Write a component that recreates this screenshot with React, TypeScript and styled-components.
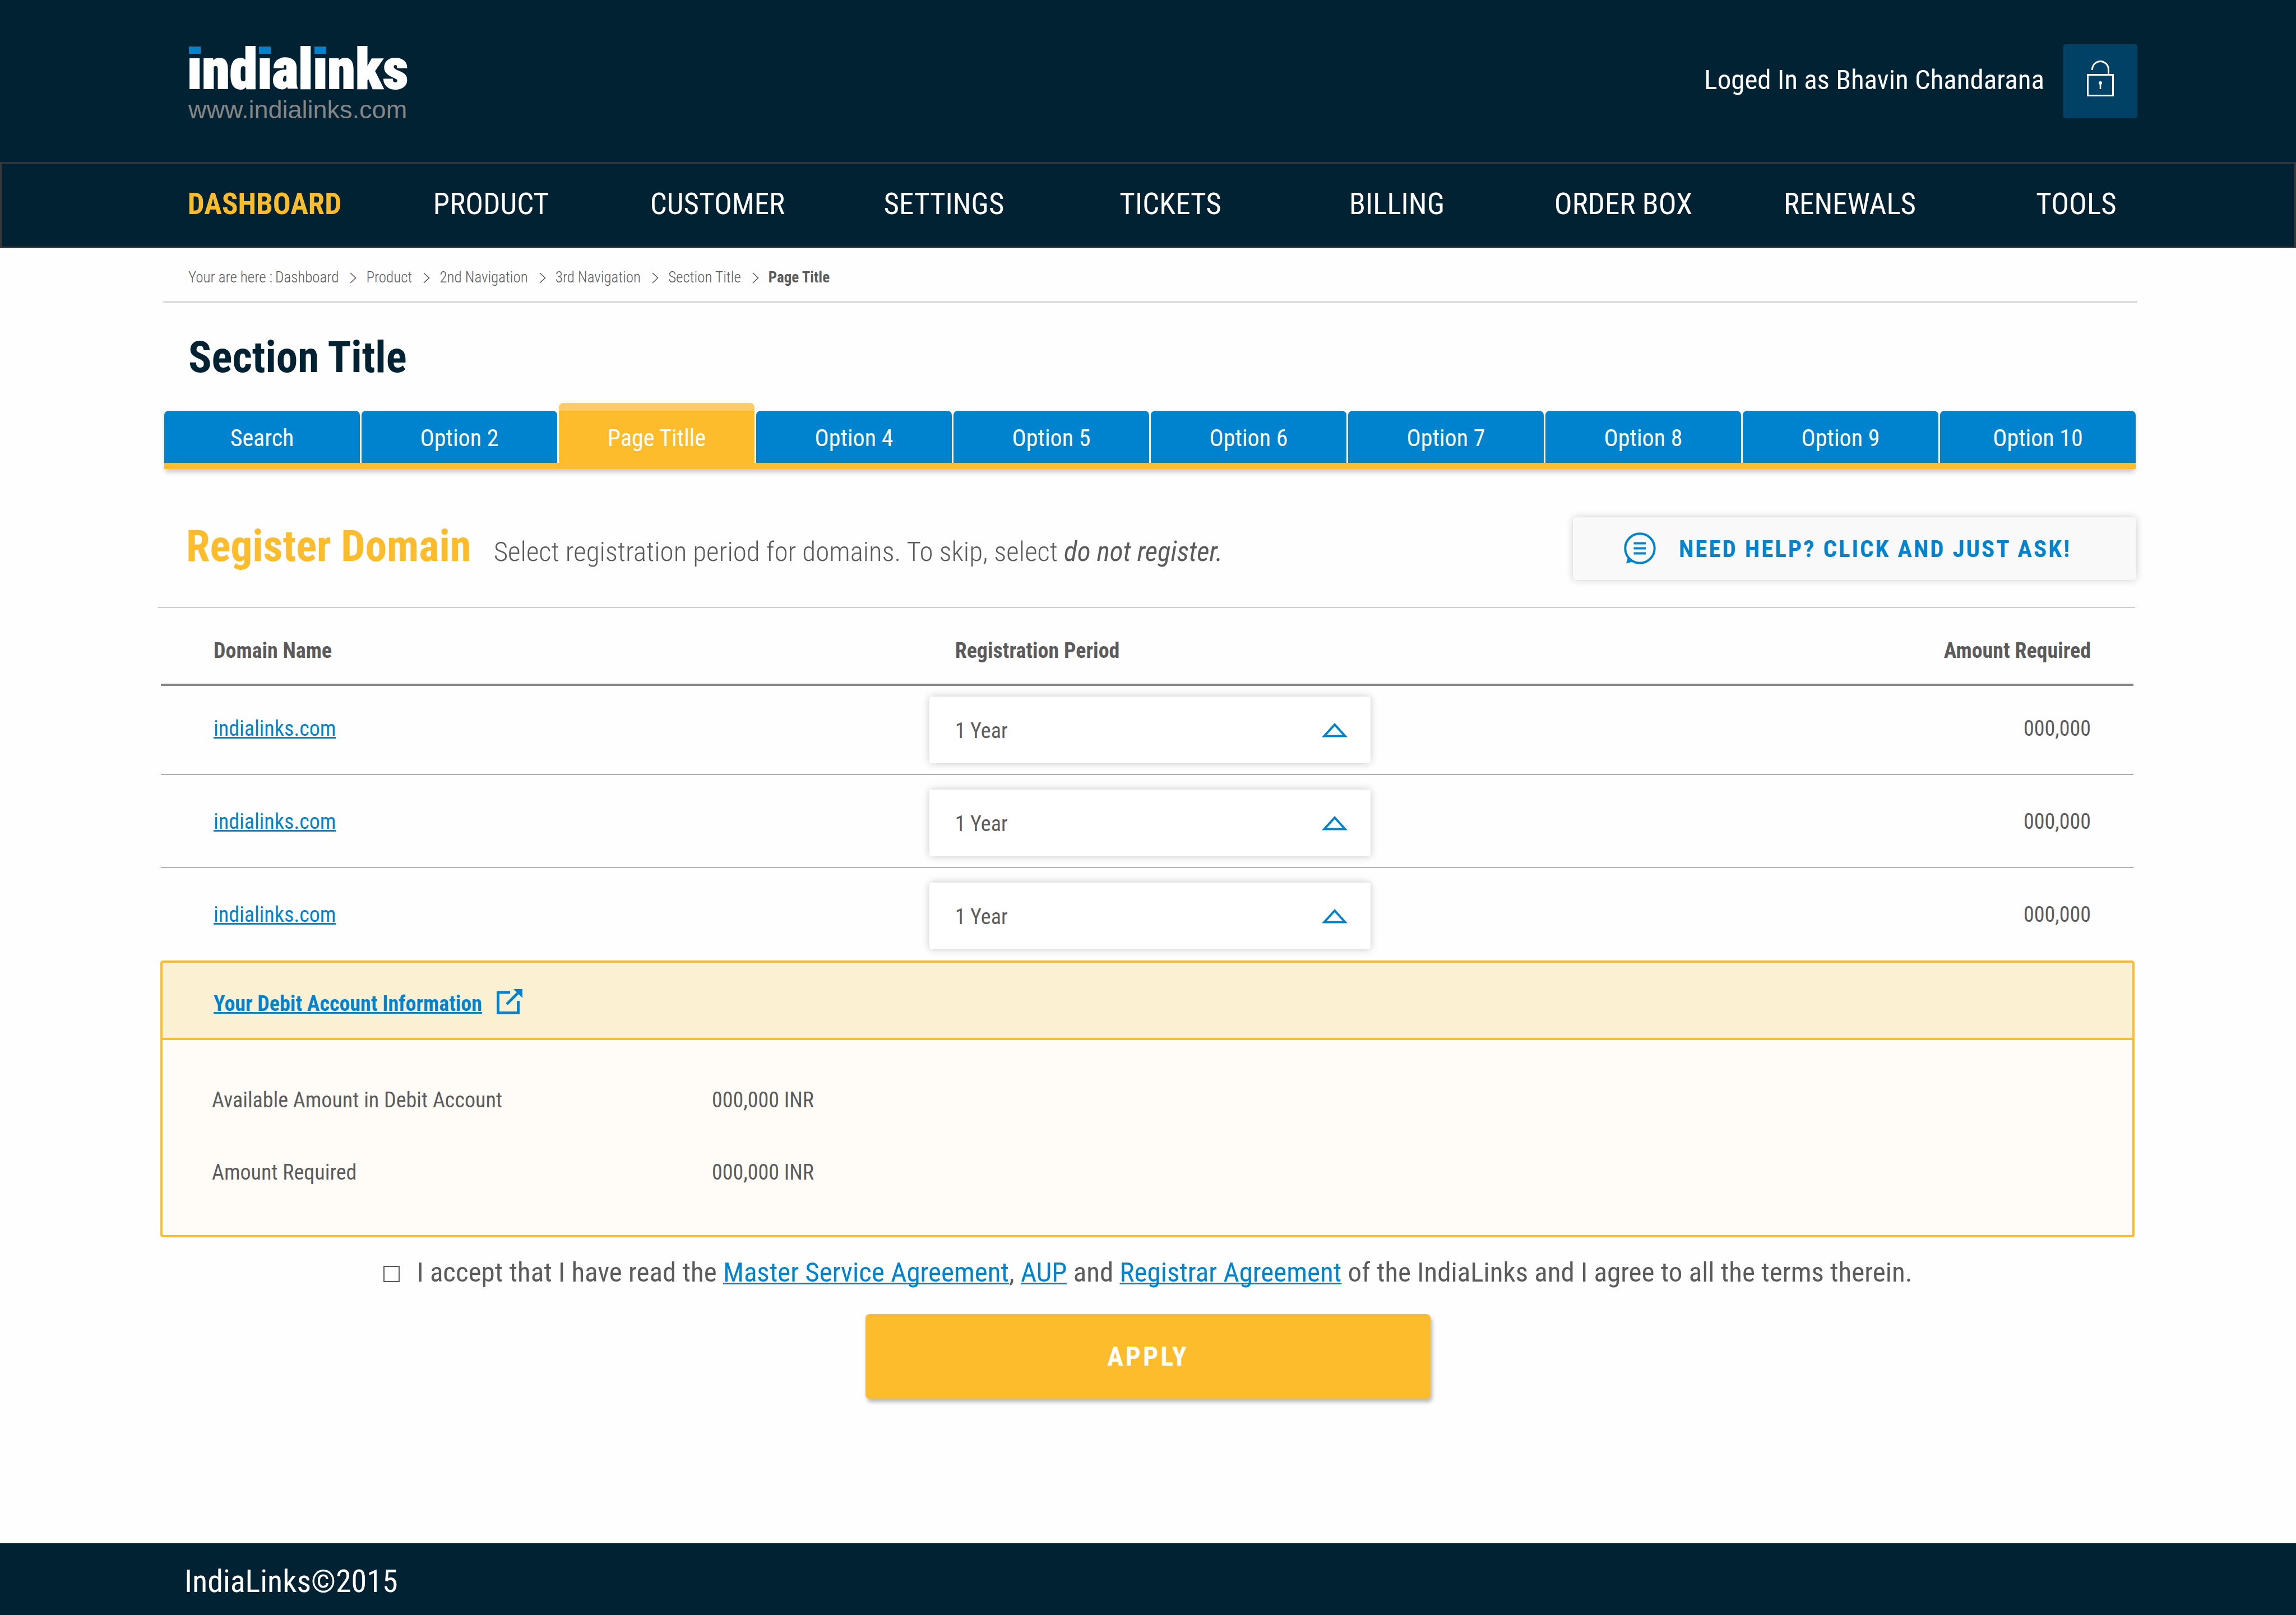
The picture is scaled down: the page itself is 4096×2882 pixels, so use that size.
import React from "react";
import styled, { createGlobalStyle } from "styled-components";

const navy = "#002233";
const blue = "#0083ce";
const yellow = "#fdbc2c";
const grey = "#5b5b5b";

const GlobalStyle = createGlobalStyle`
  *, *::before, *::after { box-sizing: border-box; }
  body {
    margin: 0;
    background: #fefefe;
    color: ${grey};
    font-family: "Roboto Condensed", Roboto, "Liberation Sans", sans-serif;
    font-size: 38px;
    line-height: 48px;
  }
  h1, h2, p, ul, ol, dl, dd { margin: 0; }
  ul, ol { list-style: none; }
  button, select, input { font: inherit; }
`;

const Page = styled.div`
  min-height: 100vh;
  display: flex;
  flex-direction: column;
`;

const Header = styled.header`
  display: flex;
  justify-content: space-between;
  align-items: flex-start;
  height: 289px;
  padding: 79px 283px 0 334px;
  background: ${navy};
  color: #fff;
`;

const Brand = styled.a`
  display: flex;
  flex-direction: column;
  text-decoration: none;
`;

const Wordmark = styled.span`
  font-size: 100px;
  line-height: 90px;
  font-weight: 900;
  color: #fff;
  -webkit-text-stroke: 2px #fff;
`;

/* The "i" carries a square blue tip in place of its round dot. */
const TippedLetter = styled.span`
  background-image:
    linear-gradient(${blue}, ${blue}),
    linear-gradient(transparent 0 36px, #fff 36px);
  background-repeat: no-repeat;
  background-position: center 18px, 0 0;
  background-size: 21px 13px, 100% 100%;
  background-clip: border-box, text;
  color: transparent;
  -webkit-text-stroke: 2px transparent;
`;

const SiteUrl = styled.span`
  padding: 2px 0 0 2px;
  font-family: "Liberation Sans", Arial, sans-serif;
  font-size: 45px;
  line-height: 50px;
  color: #878787;
`;

const Account = styled.div`
  display: flex;
  align-items: center;
  gap: 34px;
  font-size: 49px;
  line-height: 60px;
`;

const AccountName = styled.span`
  padding-bottom: 4px;
`;

const LockButton = styled.button`
  display: grid;
  place-items: center;
  width: 132px;
  height: 132px;
  padding: 0 0 10px;
  border: 0;
  border-radius: 4px;
  background: #004165;
`;

const MainNav = styled.nav`
  padding: 0 187px 0 267px;
  border: 3px solid #383838;
  background: ${navy};
`;

const NavList = styled.ul`
  display: grid;
  grid-template-columns: repeat(9, 1fr);
  height: 148px;
  padding: 0 0 5px;
  align-items: center;
`;

const NavItem = styled.li`
  display: flex;
  justify-content: center;
`;

const NavLink = styled.a<{ $active?: boolean }>`
  font-size: 53px;
  line-height: 64px;
  font-weight: ${(p) => (p.$active ? 700 : 400)};
  color: ${(p) => (p.$active ? yellow : "#fff")};
  text-decoration: none;
  white-space: nowrap;
`;

const Main = styled.main`
  flex: 1;
  display: flex;
  flex-direction: column;
  padding: 0 283px 100px 287px;
`;

const Crumbs = styled.nav`
  display: flex;
  gap: 5px;
  margin-left: 4px;
  padding: 36px 0 26px 45px;
  border-bottom: 4px solid #dfdfdf;
  font-size: 27px;
  line-height: 32px;
  font-weight: 300;
`;

const CrumbList = styled.ol`
  display: flex;
  padding: 0;
`;

const Crumb = styled.li`
  display: flex;
  align-items: center;
`;

const Chevron = styled.svg`
  margin: 2px 17px 0 20px;
`;

const CrumbLink = styled.a<{ $current?: boolean }>`
  color: ${grey};
  font-weight: ${(p) => (p.$current ? 700 : 300)};
  text-decoration: none;
`;

const SectionTitle = styled.h1`
  margin: 53px 0 0 49px;
  font-size: 77px;
  line-height: 88px;
  font-weight: 700;
  color: ${navy};
`;

const Tabs = styled.nav`
  display: flex;
  align-items: flex-end;
  gap: 3px;
  margin: 37px 3px 0 6px;
  border-bottom: 11px solid ${yellow};
  box-shadow: 0 8px 8px -2px rgba(0, 0, 0, 0.2);
`;

const Tab = styled.a<{ $active?: boolean }>`
  flex: 1;
  padding: 25px 0 20px;
  border-radius: 8px 8px 0 0;
  border-top: ${(p) => (p.$active ? "14px solid #fecb64" : "0")};
  background: ${(p) => (p.$active ? yellow : blue)};
  color: #fff;
  font-size: 42px;
  line-height: 48px;
  text-align: center;
  text-decoration: none;
`;

const Intro = styled.section`
  display: flex;
  align-items: flex-start;
  margin: 86px 4px 0 -5px;
  padding: 0 0 48px 50px;
  border-bottom: 1px solid #808080;
`;

const IntroText = styled.div`
  flex: 1;
  display: flex;
  align-items: baseline;
  gap: 40px;
  padding-top: 8px;
`;

const IntroTitle = styled.h2`
  font-size: 77px;
  line-height: 88px;
  font-weight: 700;
  color: ${yellow};
`;

const IntroNote = styled.p`
  font-size: 49px;
  line-height: 60px;
  font-weight: 300;
  em { font-weight: 400; }
`;

const HelpButton = styled.button`
  display: flex;
  align-items: center;
  gap: 40px;
  width: 1005px;
  height: 112px;
  margin-right: -2px;
  padding: 0 0 0 91px;
  border: 0;
  border-radius: 6px;
  background: #f9f9f9;
  box-shadow: 0 0 14px rgba(0, 0, 0, 0.2);
  color: ${blue};
  font-size: 43px;
  line-height: 48px;
  font-weight: 700;
  letter-spacing: 3px;
  white-space: nowrap;
`;

const DomainTable = styled.table`
  width: calc(100% - 7px);
  border-collapse: separate;
  border-spacing: 0;
  table-layout: fixed;
`;

const HeadCell = styled.th<{ $right?: boolean; $indent?: number }>`
  height: 140px;
  padding: 28px 76px 10px ${(p) => p.$indent ?? 0}px;
  border-bottom: 4px solid #868686;
  text-align: ${(p) => (p.$right ? "right" : "left")};
  font-weight: 700;
`;

const Row = styled.tr`
  & td { border-bottom: 1px solid #808080; padding-top: 26px; }
  &:first-child td { padding-top: 19px; }
  &:last-child td { border-bottom: 0; }
`;

const Cell = styled.td<{ $right?: boolean; $indent?: number }>`
  padding: 0 76px 25px ${(p) => p.$indent ?? 0}px;
  text-align: ${(p) => (p.$right ? "right" : "left")};
`;

const PeriodCell = styled.td`
  padding: 0 0 20px;
`;

const TextLink = styled.a<{ $bold?: boolean }>`
  color: ${blue};
  font-weight: ${(p) => (p.$bold ? 700 : 400)};
  text-decoration: underline;
  text-decoration-thickness: 3px;
  text-underline-offset: 2px;
  text-decoration-skip-ink: none;
`;

const SelectBox = styled.div`
  position: relative;
  width: 787px;
`;

const PeriodSelect = styled.select`
  display: block;
  appearance: none;
  width: 100%;
  height: 119px;
  padding: 3px 100px 0 46px;
  border: 0;
  border-radius: 4px;
  background: #fff;
  box-shadow: 0 0 14px rgba(0, 0, 0, 0.22);
  color: ${grey};
`;

const Arrow = styled.svg`
  position: absolute;
  right: 41px;
  top: 47px;
  pointer-events: none;
`;

const Debit = styled.section`
  margin: 0 5px 0 -1px;
  border: 4px solid ${yellow};
  border-radius: 5px;
  background: #fffcf8;
`;

const DebitHead = styled.div`
  display: flex;
  align-items: center;
  gap: 26px;
  height: 138px;
  padding: 12px 0 0 91px;
  border-bottom: 4px solid ${yellow};
  background: #fcf0d3;
`;

const OpenIcon = styled.svg`
  margin-bottom: 8px;
`;

const DebitList = styled.dl`
  display: grid;
  grid-template-columns: 892px 1fr;
  row-gap: 81px;
  padding: 83px 0 88px 88px;
`;

const Actions = styled.form`
  display: flex;
  flex-direction: column;
  align-items: center;
  margin-right: 4px;
`;

const Terms = styled.div`
  display: flex;
  align-items: center;
  gap: 30px;
  margin-top: 33px;
  font-size: 49px;
  line-height: 60px;
`;

const Tick = styled.input`
  appearance: none;
  width: 29px;
  height: 29px;
  margin: 5px 0 0;
  border: 2px solid ${grey};
  &:checked { background: ${blue}; }
`;

const ApplyButton = styled.button`
  width: 1008px;
  height: 151px;
  margin-top: 44px;
  padding: 0;
  border: 0;
  border-radius: 7px;
  background: ${yellow};
  box-shadow: 3px 6px 7px rgba(0, 0, 0, 0.28);
  color: #fff;
  font-size: 48px;
  line-height: 56px;
  font-weight: 700;
  letter-spacing: 4px;
`;

const Footer = styled.footer`
  padding: 36px 283px 28px 329px;
  background: ${navy};
  color: #fff;
  font-size: 56px;
  line-height: 64px;
`;

const navItems = ["DASHBOARD", "PRODUCT", "CUSTOMER", "SETTINGS", "TICKETS", "BILLING", "ORDER BOX", "RENEWALS", "TOOLS"];
const crumbs = ["Dashboard", "Product", "2nd Navigation", "3rd Navigation", "Section Title", "Page Title"];
const tabs = ["Search", "Option 2", "Page Titlle", "Option 4", "Option 5", "Option 6", "Option 7", "Option 8", "Option 9", "Option 10"];
const domains = [1, 2, 3].map((id) => ({ id, name: "indialinks.com", amount: "000,000" }));
const balances = [
  { label: "Available Amount in Debit Account", value: "000,000 INR" },
  { label: "Amount Required", value: "000,000 INR" },
];

const LockIcon = () => (
  <svg width="48" height="65" viewBox="0 0 48 65" fill="none" stroke="#fff" strokeWidth="3">
    <rect x="1.5" y="25.5" width="45" height="37" />
    <path d="M9.5 17v-1a14.5 14.5 0 0 1 29 0v9" />
    <circle cx="24" cy="40" r="3" fill="#fff" stroke="none" />
    <path d="M24 40v11" strokeWidth="2.6" />
  </svg>
);

const ChatIcon = () => (
  <svg width="58" height="58" viewBox="0 0 58 58" fill="none" stroke={blue} strokeWidth="4">
    <circle cx="28.500" cy="28.500" r="26.200" />
    <path d="M17.500 19.500H39M17.500 28.500H39M17.500 37.500H39" />
    <path d="M7 45L4 55.500l11-3z" fill={blue} stroke="none" />
  </svg>
);

const App: React.FC = () => (
  <Page>
    <GlobalStyle />
    <Header>
      <Brand href="#home">
        <Wordmark>
          {"indialinks".split("").map((letter, i) =>
            letter === "i" ? <TippedLetter key={i}>i</TippedLetter> : letter
          )}
        </Wordmark>
        <SiteUrl>www.indialinks.com</SiteUrl>
      </Brand>
      <Account>
        <AccountName>Loged In as Bhavin Chandarana</AccountName>
        <LockButton type="button" aria-label="Log out">
          <LockIcon />
        </LockButton>
      </Account>
    </Header>

    <MainNav>
      <NavList>
        {navItems.map((item, i) => (
          <NavItem key={item}>
            <NavLink href="#nav" $active={i === 0}>{item}</NavLink>
          </NavItem>
        ))}
      </NavList>
    </MainNav>

    <Main>
      <Crumbs>
        <span>Your are here :</span>
        <CrumbList>
          {crumbs.map((crumb, i) => (
            <Crumb key={crumb}>
              {i > 0 && (
                <Chevron width="12" height="20" viewBox="0 0 12 20" fill="none" stroke={grey} strokeWidth="1.6">
                  <path d="M1 1l9.500 9L1 19" />
                </Chevron>
              )}
              <CrumbLink href="#crumb" $current={i === crumbs.length - 1}>{crumb}</CrumbLink>
            </Crumb>
          ))}
        </CrumbList>
      </Crumbs>

      <SectionTitle>Section Title</SectionTitle>

      <Tabs>
        {tabs.map((tab, i) => (
          <Tab key={tab} href="#tab" $active={i === 2}>{tab}</Tab>
        ))}
      </Tabs>

      <Intro>
        <IntroText>
          <IntroTitle>Register Domain</IntroTitle>
          <IntroNote>
            Select registration period for domains. To skip, select <em>do not register.</em>
          </IntroNote>
        </IntroText>
        <HelpButton type="button">
          <ChatIcon />
          NEED HELP? CLICK AND JUST ASK!
        </HelpButton>
      </Intro>

      <DomainTable>
        <colgroup>
          <col style={{ width: "38.95%" }} />
          <col />
          <col style={{ width: "25%" }} />
        </colgroup>
        <thead>
          <tr>
            <HeadCell scope="col" $indent={94}>Domain Name</HeadCell>
            <HeadCell scope="col" $indent={46}>Registration Period</HeadCell>
            <HeadCell scope="col" $right>Amount Required</HeadCell>
          </tr>
        </thead>
        <tbody>
          {domains.map((domain) => (
            <Row key={domain.id}>
              <Cell $indent={94}><TextLink href="#domain">{domain.name}</TextLink></Cell>
              <PeriodCell>
                <SelectBox>
                  <PeriodSelect aria-label="Registration Period" defaultValue="1">
                    <option value="1">1 Year</option>
                    <option value="2">2 Years</option>
                  </PeriodSelect>
                  <Arrow width="46" height="26" viewBox="0 0 46 26" fill="none" stroke={blue} strokeWidth="4">
                    <path d="M23 3L4.500 23.500h37z" />
                  </Arrow>
                </SelectBox>
              </PeriodCell>
              <Cell $right>{domain.amount}</Cell>
            </Row>
          ))}
        </tbody>
      </DomainTable>

      <Debit>
        <DebitHead>
          <TextLink href="#debit" $bold>Your Debit Account Information</TextLink>
          <OpenIcon width="46" height="45" viewBox="0 0 46 45" fill="none" stroke={blue} strokeWidth="5">
            <path d="M24 6H2.500v36.500h36V21" />
            <path d="M18 27L40 5" />
            <path d="M30 0h16v16l-5-5-6-6z" fill={blue} stroke="none" />
          </OpenIcon>
        </DebitHead>
        <DebitList>
          {balances.map((row) => (
            <React.Fragment key={row.label}>
              <dt>{row.label}</dt>
              <dd>{row.value}</dd>
            </React.Fragment>
          ))}
        </DebitList>
      </Debit>

      <Actions>
        <Terms>
          <Tick type="checkbox" id="accept" />
          <label htmlFor="accept">
            I accept that I have read the <TextLink href="#msa">Master Service Agreement</TextLink>,{" "}
            <TextLink href="#aup">AUP</TextLink> and <TextLink href="#registrar">Registrar Agreement</TextLink> of
            the IndiaLinks and I agree to all the terms therein.
          </label>
        </Terms>
        <ApplyButton type="button">APPLY</ApplyButton>
      </Actions>
    </Main>

    <Footer>IndiaLinks©2015</Footer>
  </Page>
);

export default App;
